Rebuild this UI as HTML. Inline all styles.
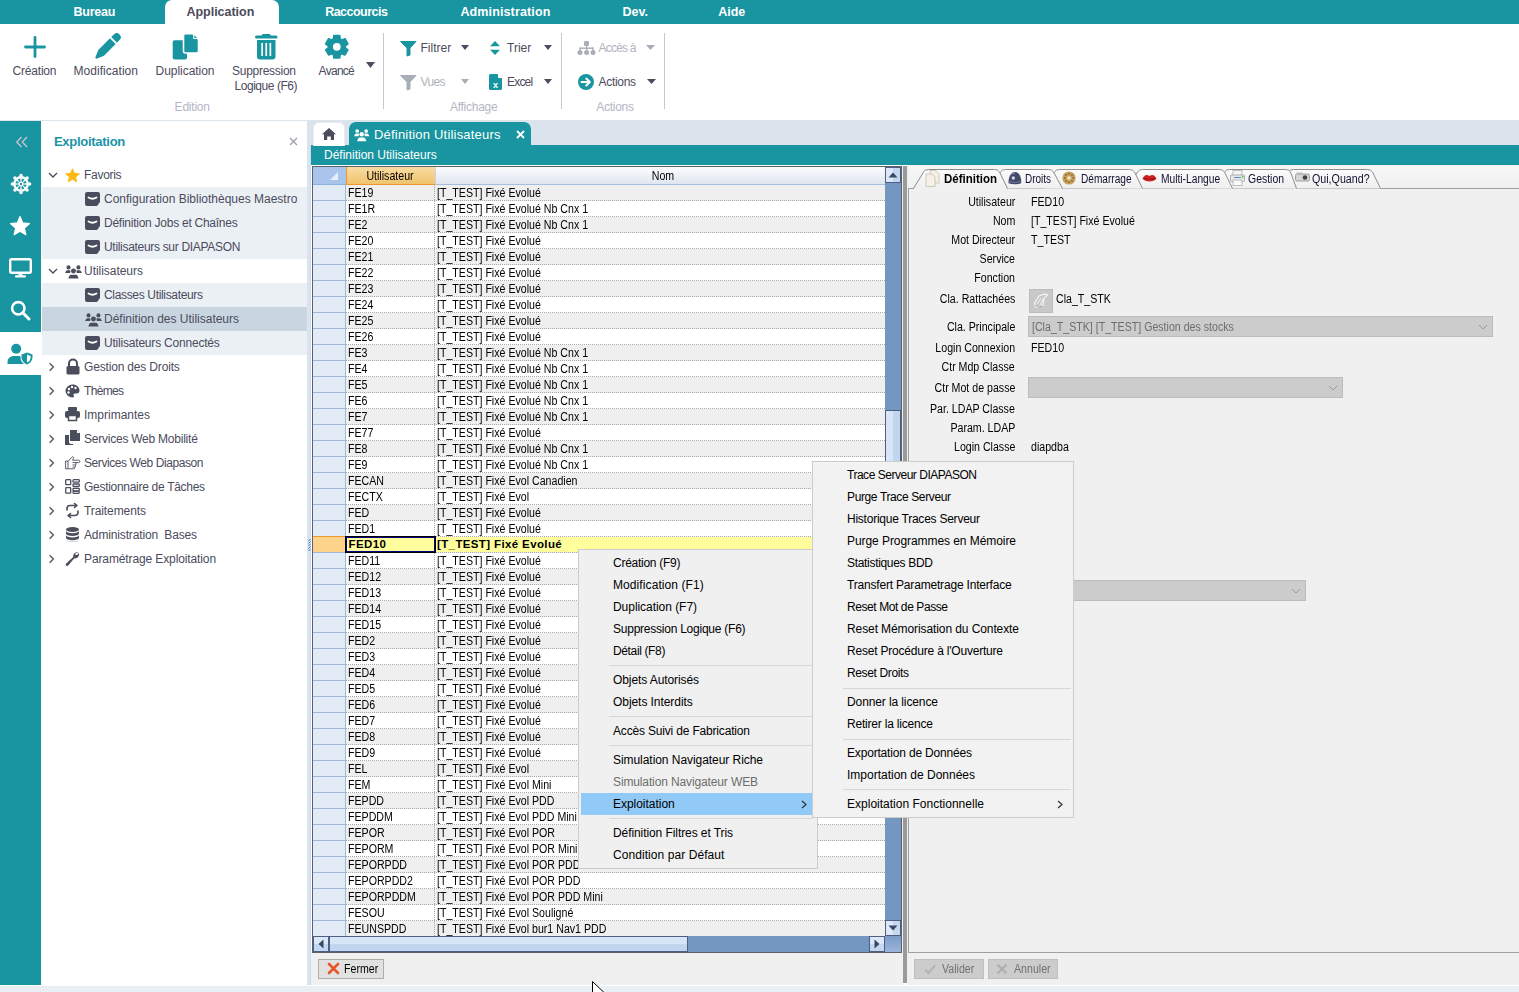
<!DOCTYPE html>
<html><head><meta charset="utf-8">
<style>
*{margin:0;padding:0;box-sizing:border-box}
html,body{width:1519px;height:992px;overflow:hidden;background:#fff;font-family:"Liberation Sans",sans-serif;position:relative}
.a{position:absolute}
.t{position:absolute;white-space:nowrap;line-height:1}
svg.a{overflow:visible}
</style></head><body>

<div class="a" style="left:0px;top:0px;width:1519px;height:24px;background:#1895a0;"></div>
<div class="a" style="left:165px;top:0px;width:114px;height:24px;background:#fff;border-radius:7px 7px 0 0"></div>
<div class="t" style="top:5.72px;font-size:12.5px;color:#fff;letter-spacing:-0.193px;font-weight:bold;left:73.4px;">Bureau</div>
<div class="t" style="top:5.72px;font-size:12.5px;color:#4b4b5c;letter-spacing:-0.025px;font-weight:bold;left:186.5px;">Application</div>
<div class="t" style="top:5.72px;font-size:12.5px;color:#fff;letter-spacing:-0.521px;font-weight:bold;left:325.2px;">Raccourcis</div>
<div class="t" style="top:5.72px;font-size:12.5px;color:#fff;letter-spacing:0.131px;font-weight:bold;left:460.4px;">Administration</div>
<div class="t" style="top:5.72px;font-size:12.5px;color:#fff;letter-spacing:0.042px;font-weight:bold;left:622.4px;">Dev.</div>
<div class="t" style="top:5.72px;font-size:12.5px;color:#fff;letter-spacing:-0.029px;font-weight:bold;left:718.2px;">Aide</div>
<div class="a" style="left:0px;top:120px;width:1519px;height:1px;background:#dde5ec;"></div>
<svg class="a" style="left:24px;top:36px;" width="22" height="22" viewBox="0 0 22 22"><path d="M11 1.5V20.5M1.5 11H20.5" stroke="#1895a0" stroke-width="2.8" stroke-linecap="round"/></svg>
<svg class="a" style="left:0px;top:0px;" width="1" height="1" viewBox="0 0 1 1"><g transform="translate(95.5,58.5) rotate(-45)" fill="#1895a0"><path d="M0.5 -0.8 Q0 0 0.5 0.8 L8 4 H24.5 V-4 H8Z"/><path d="M26.3 -4 H30 a4 4 0 0 1 0 8 H26.3z"/></g></svg>
<svg class="a" style="left:0px;top:0px;" width="1" height="1" viewBox="0 0 1 1"><rect x="172.7" y="40.2" width="14.3" height="19.3" rx="2" fill="#1895a0"/><path d="M185.5 33.8 H192.8 L198.5 39.5 V51 a2 2 0 0 1-2 2 H185.5 a2 2 0 0 1-2-2 V35.8 a2 2 0 0 1 2-2z" fill="#1895a0" stroke="#fff" stroke-width="1.6"/><path d="M193.2 33.8 L198.5 39.1 H193.2z" fill="#fff"/><path d="M194.3 35.2 L197.1 38 H194.3z" fill="#1895a0"/></svg>
<svg class="a" style="left:255px;top:34px;" width="23" height="26" viewBox="0 0 23 26"><g fill="#1895a0"><rect x="0" y="1.5" width="22.5" height="3" rx="1.5"/><rect x="7" y="0" width="8.5" height="3" rx="1.2"/><path d="M2 6 h18.5 v16.5 a3 3 0 0 1-3 3 h-12.5 a3 3 0 0 1-3-3z"/></g><g fill="#fff"><rect x="6.3" y="9" width="1.7" height="13"/><rect x="10.4" y="9" width="1.7" height="13"/><rect x="14.5" y="9" width="1.7" height="13"/></g></svg>
<svg class="a" style="left:323.5px;top:34px;" width="26" height="26" viewBox="0 0 26 26"><path fill="#1895a0" stroke="#1895a0" stroke-width="1.5" stroke-linejoin="round" d="M9.38 4.91 L9.82 1.59 L15.78 1.59 L16.22 4.91 L17.93 5.90 L21.02 4.61 L24.00 9.78 L21.34 11.81 L21.34 13.79 L24.00 15.82 L21.02 20.99 L17.93 19.70 L16.22 20.69 L15.78 24.01 L9.82 24.01 L9.38 20.69 L7.67 19.70 L4.58 20.99 L1.60 15.82 L4.26 13.79 L4.26 11.81 L1.60 9.78 L4.58 4.61 L7.67 5.90Z"/><circle cx="12.8" cy="12.8" r="3.9" fill="#fff"/></svg>
<svg class="a" style="left:365.5px;top:62px;" width="9" height="6" viewBox="0 0 9 6"><path d="M0 0H9L4.5 6Z" fill="#4a4e5c"/></svg>
<div class="t" style="top:64.84px;font-size:12px;color:#4b4b5c;letter-spacing:-0.193px;left:12.5px;">Création</div>
<div class="t" style="top:64.84px;font-size:12px;color:#4b4b5c;letter-spacing:0.043px;left:73.5px;">Modification</div>
<div class="t" style="top:64.84px;font-size:12px;color:#4b4b5c;letter-spacing:-0.036px;left:155.5px;">Duplication</div>
<div class="t" style="top:64.84px;font-size:12px;color:#4b4b5c;letter-spacing:-0.27px;left:232px;">Suppression</div>
<div class="t" style="top:79.84px;font-size:12px;color:#4b4b5c;letter-spacing:-0.457px;left:234.5px;">Logique (F6)</div>
<div class="t" style="top:64.84px;font-size:12px;color:#4b4b5c;letter-spacing:-0.721px;left:318.6px;">Avancé</div>
<div class="t" style="top:100.84px;font-size:12px;color:#b4b6c6;letter-spacing:-0.215px;left:174.6px;">Edition</div>
<div class="a" style="left:383px;top:33px;width:1px;height:76px;background:#c5c8cf;"></div>
<div class="a" style="left:561px;top:33px;width:1px;height:76px;background:#c5c8cf;"></div>
<div class="a" style="left:664px;top:33px;width:1px;height:76px;background:#c5c8cf;"></div>
<svg class="a" style="left:400px;top:41px;" width="17" height="15" viewBox="0 0 17 15"><path d="M0.5 0.5 H16 L10 7 V14 L7 15 V7Z" fill="#1895a0" stroke="#1895a0" stroke-width="1" stroke-linejoin="round"/></svg>
<div class="t" style="top:41.84px;font-size:12px;color:#4b4b5c;letter-spacing:0.023px;left:420.5px;">Filtrer</div>
<svg class="a" style="left:461px;top:45px;" width="8" height="5" viewBox="0 0 8 5"><path d="M0 0H8L4.0 5Z" fill="#4a4e5c"/></svg>
<svg class="a" style="left:490px;top:41px;" width="10" height="14" viewBox="0 0 10 14"><path d="M5 0 L10 5.2 H0Z M5 14 L10 8.8 H0Z" fill="#1895a0"/></svg>
<div class="t" style="top:41.84px;font-size:12px;color:#4b4b5c;letter-spacing:0.021px;left:507px;">Trier</div>
<svg class="a" style="left:544px;top:45px;" width="8" height="5" viewBox="0 0 8 5"><path d="M0 0H8L4.0 5Z" fill="#4a4e5c"/></svg>
<svg class="a" style="left:400px;top:75px;" width="17" height="15" viewBox="0 0 17 15"><path d="M0.5 0.5 H16 L10 7 V14 L7 15 V7Z" fill="#a8aeb7" stroke="#a8aeb7" stroke-width="1" stroke-linejoin="round"/></svg>
<div class="t" style="top:75.84px;font-size:12px;color:#b0b4bd;letter-spacing:-0.635px;left:420.5px;">Vues</div>
<svg class="a" style="left:461px;top:79px;" width="8" height="5" viewBox="0 0 8 5"><path d="M0 0H8L4.0 5Z" fill="#a8aeb7"/></svg>
<svg class="a" style="left:489px;top:74px;" width="13" height="16" viewBox="0 0 13 16"><path d="M1.5 0 H8.5 L13 4.5 V14.5 a1.5 1.5 0 0 1-1.5 1.5 H1.5 A1.5 1.5 0 0 1 0 14.5 V1.5 A1.5 1.5 0 0 1 1.5 0Z" fill="#1895a0"/><path d="M9 0 V4 H13" fill="#fff"/><text x="6.5" y="14.2" font-size="9" font-weight="bold" fill="#fff" text-anchor="middle" font-family="Liberation Sans">x</text></svg>
<div class="t" style="top:75.84px;font-size:12px;color:#4b4b5c;letter-spacing:-0.8px;left:507px;">Excel</div>
<svg class="a" style="left:544px;top:79px;" width="8" height="5" viewBox="0 0 8 5"><path d="M0 0H8L4.0 5Z" fill="#4a4e5c"/></svg>
<div class="t" style="top:100.84px;font-size:12px;color:#b4b6c6;letter-spacing:-0.277px;left:450px;">Affichage</div>
<svg class="a" style="left:577px;top:41px;" width="19" height="14" viewBox="0 0 19 14"><g fill="#a8aeb7"><rect x="7" y="0" width="5" height="5" rx="1.2"/><rect x="9" y="4" width="1.2" height="4"/><rect x="2.5" y="6.5" width="14" height="1.4"/><rect x="2.5" y="6.5" width="1.4" height="3"/><rect x="9" y="6.5" width="1.4" height="3"/><rect x="15.2" y="6.5" width="1.4" height="3"/><circle cx="3" cy="11.5" r="2.5"/><circle cx="9.6" cy="11.5" r="2.5"/><circle cx="16" cy="11.5" r="2.5"/></g></svg>
<div class="t" style="top:41.84px;font-size:12px;color:#b0b4bd;letter-spacing:-0.8px;left:598.6px;">Accès à</div>
<svg class="a" style="left:646px;top:45px;" width="9" height="5" viewBox="0 0 9 5"><path d="M0 0H9L4.5 5Z" fill="#a8aeb7"/></svg>
<svg class="a" style="left:578px;top:74px;" width="16" height="16" viewBox="0 0 16 16"><circle cx="8" cy="8" r="8" fill="#1895a0"/><path d="M3.5 8 H11.5 M8.3 4.5 L11.8 8 L8.3 11.5" stroke="#fff" stroke-width="2" fill="none" stroke-linecap="round" stroke-linejoin="round"/></svg>
<div class="t" style="top:75.84px;font-size:12px;color:#4b4b5c;letter-spacing:-0.308px;left:598.5px;">Actions</div>
<svg class="a" style="left:646.5px;top:79px;" width="9" height="5" viewBox="0 0 9 5"><path d="M0 0H9L4.5 5Z" fill="#4a4e5c"/></svg>
<div class="t" style="top:100.84px;font-size:12px;color:#b4b6c6;letter-spacing:-0.275px;left:596.3px;">Actions</div>
<div class="a" style="left:0px;top:121px;width:41px;height:864px;background:#1895a0;"></div>
<div class="a" style="left:0px;top:332px;width:41px;height:43px;background:#fff;"></div>
<svg class="a" style="left:15px;top:136px;" width="14" height="12" viewBox="0 0 14 12"><path d="M6.5 1 L1.8 6 L6.5 11 M12 1 L7.3 6 L12 11" stroke="#c5c3d3" stroke-width="1.4" fill="none"/></svg>
<svg class="a" style="left:10.7px;top:173.7px;" width="20" height="20" viewBox="0 0 20 20"><circle cx="10" cy="10" r="7.9" fill="#fff"/><circle cx="18.60" cy="10.00" r="1.7" fill="#fff"/><circle cx="16.08" cy="16.08" r="1.7" fill="#fff"/><circle cx="10.00" cy="18.60" r="1.7" fill="#fff"/><circle cx="3.92" cy="16.08" r="1.7" fill="#fff"/><circle cx="1.40" cy="10.00" r="1.7" fill="#fff"/><circle cx="3.92" cy="3.92" r="1.7" fill="#fff"/><circle cx="10.00" cy="1.40" r="1.7" fill="#fff"/><circle cx="16.08" cy="3.92" r="1.7" fill="#fff"/><path d="M12.56 10.43 L15.54 10.80 L14.48 13.36 L12.12 11.51Z" fill="#1895a0"/><path d="M11.51 12.12 L13.36 14.48 L10.80 15.54 L10.43 12.56Z" fill="#1895a0"/><path d="M9.57 12.56 L9.20 15.54 L6.64 14.48 L8.49 12.12Z" fill="#1895a0"/><path d="M7.88 11.51 L5.52 13.36 L4.46 10.80 L7.44 10.43Z" fill="#1895a0"/><path d="M7.44 9.57 L4.46 9.20 L5.52 6.64 L7.88 8.49Z" fill="#1895a0"/><path d="M8.49 7.88 L6.64 5.52 L9.20 4.46 L9.57 7.44Z" fill="#1895a0"/><path d="M10.43 7.44 L10.80 4.46 L13.36 5.52 L11.51 7.88Z" fill="#1895a0"/><path d="M12.12 8.49 L14.48 6.64 L15.54 9.20 L12.56 9.57Z" fill="#1895a0"/><circle cx="10" cy="10" r="1.2" fill="#1895a0"/></svg>
<svg class="a" style="left:10px;top:216px;" width="20" height="20" viewBox="0 0 20 20"><path d="M10.00 0.60 L12.70 6.88 L19.51 7.51 L14.37 12.02 L15.88 18.69 L10.00 15.20 L4.12 18.69 L5.63 12.02 L0.49 7.51 L7.30 6.88Z" fill="#fff" stroke="#fff" stroke-width="1.2" stroke-linejoin="round"/></svg>
<svg class="a" style="left:9px;top:258px;" width="23" height="20" viewBox="0 0 23 20"><rect x="1.2" y="1.2" width="20.6" height="13.6" rx="1.5" stroke="#fff" stroke-width="2.4" fill="none"/><rect x="9.5" y="14.5" width="4" height="3" fill="#fff"/><rect x="6" y="17.2" width="11" height="2.2" rx="1" fill="#fff"/></svg>
<svg class="a" style="left:10px;top:300px;" width="21" height="21" viewBox="0 0 21 21"><circle cx="8.3" cy="8.3" r="6.2" stroke="#fff" stroke-width="2.6" fill="none"/><path d="M12.8 12.8 L19 19" stroke="#fff" stroke-width="3" stroke-linecap="round"/></svg>
<svg class="a" style="left:0px;top:0px;" width="1" height="1" viewBox="0 0 1 1"><circle cx="16.2" cy="348.7" r="5" fill="#1895a0"/><path d="M7.5 364 V361.5 a6 6 0 0 1 6-5.5 H20.5 L24.5 364 Z" fill="#1895a0"/><path d="M21.5 354.5 L27 352.5 L32.5 354.5 V357 C32.5 361 29.5 363.5 27 364.5 C24.5 363.5 21.5 361 21.5 357 Z" fill="#1895a0" stroke="#fff" stroke-width="2"/><path d="M21.5 354.5 L27 352.5 L32.5 354.5 V357 C32.5 361 29.5 363.5 27 364.5 C24.5 363.5 21.5 361 21.5 357 Z" fill="#1895a0"/><path d="M27 354.6 L30.6 355.9 V357.3 C30.6 360 28.9 361.9 27 362.6 Z" fill="#fff"/></svg>
<div class="a" style="left:41px;top:121px;width:266px;height:864px;background:#fff;"></div>
<div class="a" style="left:307px;top:121px;width:4px;height:864px;background:#dbe4ec;"></div>
<div class="a" style="left:310px;top:145px;width:1px;height:840px;background:#c9dcf3;"></div>
<div class="t" style="top:135.00px;font-size:13px;color:#1b93a8;letter-spacing:-0.271px;font-weight:bold;left:53.9px;">Exploitation</div>
<svg class="a" style="left:289px;top:137px;" width="9" height="9" viewBox="0 0 9 9"><path d="M1 1L8 8M8 1L1 8" stroke="#9aa0aa" stroke-width="1.3"/></svg>
<div class="a" style="left:42px;top:187px;width:265px;height:72px;background:#ebf0f5;"></div>
<div class="a" style="left:42px;top:283px;width:265px;height:72px;background:#ebf0f5;"></div>
<div class="a" style="left:42px;top:307px;width:265px;height:24px;background:#c9d6e1;"></div>
<svg class="a" style="left:48px;top:172px;" width="10" height="6" viewBox="0 0 10 6"><path d="M1 1 L5 5 L9 1" stroke="#4b4b5c" stroke-width="1.3" fill="none"/></svg>
<svg class="a" style="left:65px;top:168px;" width="15" height="15" viewBox="0 0 15 15"><path d="M7.50 0.70 L9.44 5.33 L14.44 5.74 L10.64 9.02 L11.79 13.91 L7.50 11.30 L3.21 13.91 L4.36 9.02 L0.56 5.74 L5.56 5.33Z" fill="#fdb813" stroke="#fdb813" stroke-width="0.8" stroke-linejoin="round"/></svg>
<div class="t" style="top:168.84px;font-size:12px;color:#4b4b5c;letter-spacing:-0.29px;left:84px;">Favoris</div>
<svg class="a" style="left:85px;top:192px;" width="15" height="14" viewBox="0 0 15 14"><path d="M2 0 H13 a2 2 0 0 1 2 2 V10 L12 14 H2 a2 2 0 0 1-2-2 V2 a2 2 0 0 1 2-2z" fill="#4a4e5c"/><path d="M3.5 5.5 Q7.5 8 11.5 5.5" stroke="#fff" stroke-width="1.8" fill="none" stroke-linecap="round"/></svg>
<div class="t" style="top:192.84px;font-size:12px;color:#4b4b5c;letter-spacing:-0.004px;left:104px;">Configuration Bibliothèques Maestro</div>
<svg class="a" style="left:85px;top:216px;" width="15" height="14" viewBox="0 0 15 14"><path d="M2 0 H13 a2 2 0 0 1 2 2 V10 L12 14 H2 a2 2 0 0 1-2-2 V2 a2 2 0 0 1 2-2z" fill="#4a4e5c"/><path d="M3.5 5.5 Q7.5 8 11.5 5.5" stroke="#fff" stroke-width="1.8" fill="none" stroke-linecap="round"/></svg>
<div class="t" style="top:216.84px;font-size:12px;color:#4b4b5c;letter-spacing:-0.255px;left:104px;">Définition Jobs et Chaînes</div>
<svg class="a" style="left:85px;top:240px;" width="15" height="14" viewBox="0 0 15 14"><path d="M2 0 H13 a2 2 0 0 1 2 2 V10 L12 14 H2 a2 2 0 0 1-2-2 V2 a2 2 0 0 1 2-2z" fill="#4a4e5c"/><path d="M3.5 5.5 Q7.5 8 11.5 5.5" stroke="#fff" stroke-width="1.8" fill="none" stroke-linecap="round"/></svg>
<div class="t" style="top:240.84px;font-size:12px;color:#4b4b5c;letter-spacing:-0.309px;left:104px;">Utilisateurs sur DIAPASON</div>
<svg class="a" style="left:48px;top:268px;" width="10" height="6" viewBox="0 0 10 6"><path d="M1 1 L5 5 L9 1" stroke="#4b4b5c" stroke-width="1.3" fill="none"/></svg>
<svg class="a" style="left:65px;top:263px;" width="18" height="15" viewBox="0 0 18 15"><g fill="#4a4e5c" transform="scale(1.1)"><circle cx="3.2" cy="4" r="1.85"/><circle cx="12.2" cy="4" r="1.85"/><circle cx="7.7" cy="7.3" r="2.25"/><path d="M0 9.2 L1 7.2 Q1.4 6.6 2.2 6.6 H4.9 Q5.1 8 4.6 9.2z"/><path d="M15.4 9.2 L14.4 7.2 Q14 6.6 13.2 6.6 H10.5 Q10.3 8 10.8 9.2z"/><path d="M3 14.2 L4 11.7 Q4.5 10.6 5.5 10.6 H9.9 Q10.9 10.6 11.4 11.7 L12.4 14.2z"/></g></svg>
<div class="t" style="top:264.84px;font-size:12px;color:#4b4b5c;letter-spacing:-0.041px;left:84px;">Utilisateurs</div>
<svg class="a" style="left:85px;top:288px;" width="15" height="14" viewBox="0 0 15 14"><path d="M2 0 H13 a2 2 0 0 1 2 2 V10 L12 14 H2 a2 2 0 0 1-2-2 V2 a2 2 0 0 1 2-2z" fill="#4a4e5c"/><path d="M3.5 5.5 Q7.5 8 11.5 5.5" stroke="#fff" stroke-width="1.8" fill="none" stroke-linecap="round"/></svg>
<div class="t" style="top:288.84px;font-size:12px;color:#4b4b5c;letter-spacing:-0.335px;left:104px;">Classes Utilisateurs</div>
<svg class="a" style="left:85px;top:311px;" width="18" height="15" viewBox="0 0 18 15"><g fill="#4a4e5c" transform="scale(1.1)"><circle cx="3.2" cy="4" r="1.85"/><circle cx="12.2" cy="4" r="1.85"/><circle cx="7.7" cy="7.3" r="2.25"/><path d="M0 9.2 L1 7.2 Q1.4 6.6 2.2 6.6 H4.9 Q5.1 8 4.6 9.2z"/><path d="M15.4 9.2 L14.4 7.2 Q14 6.6 13.2 6.6 H10.5 Q10.3 8 10.8 9.2z"/><path d="M3 14.2 L4 11.7 Q4.5 10.6 5.5 10.6 H9.9 Q10.9 10.6 11.4 11.7 L12.4 14.2z"/></g></svg>
<div class="t" style="top:312.84px;font-size:12px;color:#4b4b5c;letter-spacing:-0.015px;left:104px;">Définition des Utilisateurs</div>
<svg class="a" style="left:85px;top:336px;" width="15" height="14" viewBox="0 0 15 14"><path d="M2 0 H13 a2 2 0 0 1 2 2 V10 L12 14 H2 a2 2 0 0 1-2-2 V2 a2 2 0 0 1 2-2z" fill="#4a4e5c"/><path d="M3.5 5.5 Q7.5 8 11.5 5.5" stroke="#fff" stroke-width="1.8" fill="none" stroke-linecap="round"/></svg>
<div class="t" style="top:336.84px;font-size:12px;color:#4b4b5c;letter-spacing:-0.202px;left:104px;">Utilisateurs Connectés</div>
<svg class="a" style="left:49px;top:362px;" width="6" height="10" viewBox="0 0 6 10"><path d="M0.6 1.3 L4.4 5 L0.6 8.7" stroke="#4b4b5c" stroke-width="1.2" fill="none"/></svg>
<div class="t" style="top:360.84px;font-size:12px;color:#4b4b5c;letter-spacing:-0.171px;left:84px;white-space:pre;">Gestion des Droits</div>
<svg class="a" style="left:49px;top:386px;" width="6" height="10" viewBox="0 0 6 10"><path d="M0.6 1.3 L4.4 5 L0.6 8.7" stroke="#4b4b5c" stroke-width="1.2" fill="none"/></svg>
<div class="t" style="top:384.84px;font-size:12px;color:#4b4b5c;letter-spacing:-0.669px;left:84px;white-space:pre;">Thèmes</div>
<svg class="a" style="left:49px;top:410px;" width="6" height="10" viewBox="0 0 6 10"><path d="M0.6 1.3 L4.4 5 L0.6 8.7" stroke="#4b4b5c" stroke-width="1.2" fill="none"/></svg>
<div class="t" style="top:408.84px;font-size:12px;color:#4b4b5c;letter-spacing:-0.001px;left:84px;white-space:pre;">Imprimantes</div>
<svg class="a" style="left:49px;top:434px;" width="6" height="10" viewBox="0 0 6 10"><path d="M0.6 1.3 L4.4 5 L0.6 8.7" stroke="#4b4b5c" stroke-width="1.2" fill="none"/></svg>
<div class="t" style="top:432.84px;font-size:12px;color:#4b4b5c;letter-spacing:-0.234px;left:84px;white-space:pre;">Services Web Mobilité</div>
<svg class="a" style="left:49px;top:458px;" width="6" height="10" viewBox="0 0 6 10"><path d="M0.6 1.3 L4.4 5 L0.6 8.7" stroke="#4b4b5c" stroke-width="1.2" fill="none"/></svg>
<div class="t" style="top:456.84px;font-size:12px;color:#4b4b5c;letter-spacing:-0.422px;left:84px;white-space:pre;">Services Web Diapason</div>
<svg class="a" style="left:49px;top:482px;" width="6" height="10" viewBox="0 0 6 10"><path d="M0.6 1.3 L4.4 5 L0.6 8.7" stroke="#4b4b5c" stroke-width="1.2" fill="none"/></svg>
<div class="t" style="top:480.84px;font-size:12px;color:#4b4b5c;letter-spacing:-0.294px;left:84px;white-space:pre;">Gestionnaire de Tâches</div>
<svg class="a" style="left:49px;top:506px;" width="6" height="10" viewBox="0 0 6 10"><path d="M0.6 1.3 L4.4 5 L0.6 8.7" stroke="#4b4b5c" stroke-width="1.2" fill="none"/></svg>
<div class="t" style="top:504.84px;font-size:12px;color:#4b4b5c;letter-spacing:-0.09px;left:84px;white-space:pre;">Traitements</div>
<svg class="a" style="left:49px;top:530px;" width="6" height="10" viewBox="0 0 6 10"><path d="M0.6 1.3 L4.4 5 L0.6 8.7" stroke="#4b4b5c" stroke-width="1.2" fill="none"/></svg>
<div class="t" style="top:528.84px;font-size:12px;color:#4b4b5c;letter-spacing:-0.147px;left:84px;white-space:pre;">Administration  Bases</div>
<svg class="a" style="left:49px;top:554px;" width="6" height="10" viewBox="0 0 6 10"><path d="M0.6 1.3 L4.4 5 L0.6 8.7" stroke="#4b4b5c" stroke-width="1.2" fill="none"/></svg>
<div class="t" style="top:552.84px;font-size:12px;color:#4b4b5c;letter-spacing:-0.115px;left:84px;white-space:pre;">Paramétrage Exploitation</div>
<svg class="a" style="left:66px;top:359px;" width="14" height="16" viewBox="0 0 14 16"><path d="M3 7 V4.5 a4 4 0 0 1 8 0 V7" stroke="#4a4e5c" stroke-width="2" fill="none"/><rect x="0.5" y="7" width="13" height="8.5" rx="1.5" fill="#4a4e5c"/></svg>
<svg class="a" style="left:65px;top:384px;" width="15" height="14" viewBox="0 0 15 14"><path d="M7.5 0.5 a7 6.5 0 0 0 0 13 c1.5 0 1.8-1 1.2-2 c-0.6-1 0-2 1.3-2 h1.5 a3 3 0 0 0 3-3 c0-3.5-3-6-7-6z" fill="#4a4e5c"/><circle cx="4" cy="5" r="1.2" fill="#fff"/><circle cx="7" cy="3" r="1.2" fill="#fff"/><circle cx="10.5" cy="4" r="1.2" fill="#fff"/><circle cx="3.5" cy="8.5" r="1.2" fill="#fff"/></svg>
<svg class="a" style="left:65px;top:407px;" width="15" height="14" viewBox="0 0 15 14"><g fill="#4a4e5c"><rect x="3" y="0" width="9" height="4" rx="1"/><rect x="0" y="4" width="15" height="7" rx="2"/></g><rect x="3.5" y="8.5" width="8" height="5" fill="#fff" stroke="#4a4e5c" stroke-width="1.5"/></svg>
<svg class="a" style="left:65px;top:430px;" width="15" height="15" viewBox="0 0 15 15"><g fill="#4a4e5c"><path d="M5 0 H12 L15 3 V11 H5z"/><path d="M0 5 H4 V12 a2 2 0 0 0 2 2 H8 V15 H0z"/></g><path d="M12 0 V3 H15" fill="#fff"/></svg>
<svg class="a" style="left:65px;top:455px;" width="16" height="15" viewBox="0 0 16 15"><path d="M0.6 6 H3 V13.8 H0.6z M3 6.5 L6.4 2.6 Q7.3 1.2 8.3 2 Q8.9 2.6 8.3 3.8 L7.6 5.2 H13.6 Q14.9 5.2 14.9 6.4 Q14.9 7.6 13.6 7.6 H10.2 Q11.2 7.8 11.2 8.9 Q11.2 10 10.1 10 Q10.8 10.4 10.6 11.3 Q10.4 12.1 9.5 12.1 Q10 12.6 9.7 13.2 Q9.4 13.8 8.4 13.8 H3 M7.5 7.6 H10.2 M7.5 10 H10.1 M7.5 12.1 H9.5" stroke="#4a4e5c" stroke-width="1" fill="none" stroke-linejoin="round" opacity="0.9"/></svg>
<svg class="a" style="left:65px;top:479px;" width="15" height="15" viewBox="0 0 15 15"><g fill="none" stroke="#4a4e5c" stroke-width="1.3"><rect x="0.7" y="0.7" width="5" height="5" rx="0.8"/><rect x="0.7" y="8.7" width="5" height="5.5" rx="0.8"/><rect x="8" y="0.7" width="6.3" height="2.5" rx="0.8"/><rect x="8" y="5" width="6.3" height="2.5" rx="0.8"/><rect x="8" y="9.3" width="6.3" height="2.5" rx="0.8"/><rect x="8" y="12.4" width="6.3" height="2" rx="0.8"/></g></svg>
<svg class="a" style="left:65px;top:503px;" width="15" height="15" viewBox="0 0 15 15"><path d="M2 7 V5.5 a3 3 0 0 1 3-3 H11.5 M9.5 0.5 L12 2.5 L9.5 4.5 M13 8 V9.5 a3 3 0 0 1-3 3 H3.5 M5.5 10.5 L3 12.5 L5.5 14.5" stroke="#4a4e5c" stroke-width="1.6" fill="none" stroke-linecap="round" stroke-linejoin="round"/></svg>
<svg class="a" style="left:66px;top:527px;" width="13" height="15" viewBox="0 0 13 15"><g fill="#4a4e5c"><ellipse cx="6.5" cy="2.5" rx="6.5" ry="2.5"/><path d="M0 3.8 a6.5 2.5 0 0 0 13 0 V6.5 a6.5 2.5 0 0 1-13 0z"/><path d="M0 8 a6.5 2.5 0 0 0 13 0 V10.7 a6.5 2.5 0 0 1-13 0z"/><path d="M0 12.2 a6.5 2.5 0 0 0 13 0 V12.5 a6.5 2.5 0 0 1-13 0z"/></g></svg>
<svg class="a" style="left:65px;top:551px;" width="15" height="15" viewBox="0 0 15 15"><path d="M13.5 1.5 a4 4 0 0 0-5.3 4.6 L1.2 12.5 a1.4 1.4 0 0 0 2 2 L9.3 7.3 a4 4 0 0 0 4.6-5.2 L11.8 4.2 L10.5 3.8 L10.2 2.6z" fill="#4a4e5c"/></svg>
<div class="a" style="left:311px;top:121px;width:1208px;height:24px;background:#dbe4ec;"></div>
<div class="a" style="left:311px;top:145px;width:1208px;height:20px;background:#1895a0;"></div>
<div class="a" style="left:313px;top:122px;width:32px;height:24px;background:#fff;border-radius:6px 6px 0 0;border:1px solid #e6ecf2;border-bottom:none"></div>
<svg class="a" style="left:322px;top:128px;" width="14" height="12" viewBox="0 0 14 12"><path d="M7 0 L14 6.3 H12 V12 H8.8 V8.5 H5.2 V12 H2 V6.3 H0z" fill="#4a4e5c"/></svg>
<div class="a" style="left:349px;top:122px;width:182px;height:24px;background:#1895a0;border-radius:7px 7px 0 0"></div>
<svg class="a" style="left:354px;top:127px;" width="18" height="15" viewBox="0 0 18 15"><g fill="#fff" transform="scale(1.0)"><circle cx="3.2" cy="4" r="1.85"/><circle cx="12.2" cy="4" r="1.85"/><circle cx="7.7" cy="7.3" r="2.25"/><path d="M0 9.2 L1 7.2 Q1.4 6.6 2.2 6.6 H4.9 Q5.1 8 4.6 9.2z"/><path d="M15.4 9.2 L14.4 7.2 Q14 6.6 13.2 6.6 H10.5 Q10.3 8 10.8 9.2z"/><path d="M3 14.2 L4 11.7 Q4.5 10.6 5.5 10.6 H9.9 Q10.9 10.6 11.4 11.7 L12.4 14.2z"/></g></svg>
<div class="t" style="top:128.00px;font-size:13px;color:#fff;letter-spacing:0.2px;left:374px;">Définition Utilisateurs</div>
<svg class="a" style="left:516px;top:130px;" width="9" height="9" viewBox="0 0 9 9"><path d="M1 1L8 8M8 1L1 8" stroke="#fff" stroke-width="1.8"/></svg>
<div class="t" style="top:148.84px;font-size:12px;color:#fff;left:324px;">Définition Utilisateurs</div>
<div class="a" style="left:312px;top:166px;width:590px;height:787px;background:#fff;border:1px solid #5d6068"></div>
<div class="a" style="left:902px;top:166px;width:1px;height:787px;background:#f0f0f0;"></div>
<div class="a" style="left:313px;top:167px;width:33px;height:18px;background:#a9c4ea;border-bottom:1px solid #8fb0d8"></div>
<svg class="a" style="left:330px;top:172px;" width="8" height="8" viewBox="0 0 8 8"><path d="M8 0 V8 H0z" fill="#e6eef9"/></svg>
<div class="a" style="left:346px;top:167px;width:89px;height:18px;background:linear-gradient(#f9dca3,#f0c36c);border-bottom:1px solid #f3962f;border-left:1px solid #f3962f"></div>
<div class="a" style="left:435px;top:167px;width:450px;height:18px;background:linear-gradient(#fbfcfe,#dfe5ef);border-bottom:1px solid #a7bfdc;border-left:1px solid #c9d5e6"></div>
<div class="t" style="top:169.84px;font-size:12px;color:#000;transform:scaleX(0.885);transform-origin:50% 0;left:346.0px;width:88px;text-align:center;">Utilisateur</div>
<div class="t" style="top:169.84px;font-size:12px;color:#000;transform:scaleX(0.885);transform-origin:50% 0;left:613.0px;width:100px;text-align:center;">Nom</div>
<div class="a" style="left:346px;top:185px;width:539px;height:751px;background:repeating-linear-gradient(#efefef 0px,#efefef 16px,#fff 16px,#fff 32px)"></div>
<div class="a" style="left:346px;top:185px;width:539px;height:751px;background-image:linear-gradient(90deg,#a9a9a9 50%,transparent 50%);background-size:2px 1px;-webkit-mask:repeating-linear-gradient(transparent 0px,transparent 15px,#000 15px,#000 16px)"></div>
<div class="a" style="left:434px;top:185px;width:1px;height:751px;background-image:linear-gradient(#a9a9a9 50%,transparent 50%);background-size:1px 2px"></div>
<div class="a" style="left:313px;top:185px;width:33px;height:751px;background:repeating-linear-gradient(#e3ebf7 0px,#e3ebf7 15px,#9fb8d8 15px,#9fb8d8 16px);border-right:1px solid #9fb8d8"></div>
<div class="t" style="top:186.84px;font-size:12px;color:#000;transform:scaleX(0.885);transform-origin:0 0;left:348px;">FE19</div>
<div class="t" style="top:186.84px;font-size:12px;color:#000;transform:scaleX(0.885);transform-origin:0 0;left:437px;">[T_TEST] Fixé Evolué</div>
<div class="t" style="top:202.84px;font-size:12px;color:#000;transform:scaleX(0.885);transform-origin:0 0;left:348px;">FE1R</div>
<div class="t" style="top:202.84px;font-size:12px;color:#000;transform:scaleX(0.885);transform-origin:0 0;left:437px;">[T_TEST] Fixé Evolué Nb Cnx 1</div>
<div class="t" style="top:218.84px;font-size:12px;color:#000;transform:scaleX(0.885);transform-origin:0 0;left:348px;">FE2</div>
<div class="t" style="top:218.84px;font-size:12px;color:#000;transform:scaleX(0.885);transform-origin:0 0;left:437px;">[T_TEST] Fixé Evolué Nb Cnx 1</div>
<div class="t" style="top:234.84px;font-size:12px;color:#000;transform:scaleX(0.885);transform-origin:0 0;left:348px;">FE20</div>
<div class="t" style="top:234.84px;font-size:12px;color:#000;transform:scaleX(0.885);transform-origin:0 0;left:437px;">[T_TEST] Fixé Evolué</div>
<div class="t" style="top:250.84px;font-size:12px;color:#000;transform:scaleX(0.885);transform-origin:0 0;left:348px;">FE21</div>
<div class="t" style="top:250.84px;font-size:12px;color:#000;transform:scaleX(0.885);transform-origin:0 0;left:437px;">[T_TEST] Fixé Evolué</div>
<div class="t" style="top:266.84px;font-size:12px;color:#000;transform:scaleX(0.885);transform-origin:0 0;left:348px;">FE22</div>
<div class="t" style="top:266.84px;font-size:12px;color:#000;transform:scaleX(0.885);transform-origin:0 0;left:437px;">[T_TEST] Fixé Evolué</div>
<div class="t" style="top:282.84px;font-size:12px;color:#000;transform:scaleX(0.885);transform-origin:0 0;left:348px;">FE23</div>
<div class="t" style="top:282.84px;font-size:12px;color:#000;transform:scaleX(0.885);transform-origin:0 0;left:437px;">[T_TEST] Fixé Evolué</div>
<div class="t" style="top:298.84px;font-size:12px;color:#000;transform:scaleX(0.885);transform-origin:0 0;left:348px;">FE24</div>
<div class="t" style="top:298.84px;font-size:12px;color:#000;transform:scaleX(0.885);transform-origin:0 0;left:437px;">[T_TEST] Fixé Evolué</div>
<div class="t" style="top:314.84px;font-size:12px;color:#000;transform:scaleX(0.885);transform-origin:0 0;left:348px;">FE25</div>
<div class="t" style="top:314.84px;font-size:12px;color:#000;transform:scaleX(0.885);transform-origin:0 0;left:437px;">[T_TEST] Fixé Evolué</div>
<div class="t" style="top:330.84px;font-size:12px;color:#000;transform:scaleX(0.885);transform-origin:0 0;left:348px;">FE26</div>
<div class="t" style="top:330.84px;font-size:12px;color:#000;transform:scaleX(0.885);transform-origin:0 0;left:437px;">[T_TEST] Fixé Evolué</div>
<div class="t" style="top:346.84px;font-size:12px;color:#000;transform:scaleX(0.885);transform-origin:0 0;left:348px;">FE3</div>
<div class="t" style="top:346.84px;font-size:12px;color:#000;transform:scaleX(0.885);transform-origin:0 0;left:437px;">[T_TEST] Fixé Evolué Nb Cnx 1</div>
<div class="t" style="top:362.84px;font-size:12px;color:#000;transform:scaleX(0.885);transform-origin:0 0;left:348px;">FE4</div>
<div class="t" style="top:362.84px;font-size:12px;color:#000;transform:scaleX(0.885);transform-origin:0 0;left:437px;">[T_TEST] Fixé Evolué Nb Cnx 1</div>
<div class="t" style="top:378.84px;font-size:12px;color:#000;transform:scaleX(0.885);transform-origin:0 0;left:348px;">FE5</div>
<div class="t" style="top:378.84px;font-size:12px;color:#000;transform:scaleX(0.885);transform-origin:0 0;left:437px;">[T_TEST] Fixé Evolué Nb Cnx 1</div>
<div class="t" style="top:394.84px;font-size:12px;color:#000;transform:scaleX(0.885);transform-origin:0 0;left:348px;">FE6</div>
<div class="t" style="top:394.84px;font-size:12px;color:#000;transform:scaleX(0.885);transform-origin:0 0;left:437px;">[T_TEST] Fixé Evolué Nb Cnx 1</div>
<div class="t" style="top:410.84px;font-size:12px;color:#000;transform:scaleX(0.885);transform-origin:0 0;left:348px;">FE7</div>
<div class="t" style="top:410.84px;font-size:12px;color:#000;transform:scaleX(0.885);transform-origin:0 0;left:437px;">[T_TEST] Fixé Evolué Nb Cnx 1</div>
<div class="t" style="top:426.84px;font-size:12px;color:#000;transform:scaleX(0.885);transform-origin:0 0;left:348px;">FE77</div>
<div class="t" style="top:426.84px;font-size:12px;color:#000;transform:scaleX(0.885);transform-origin:0 0;left:437px;">[T_TEST] Fixé Evolué</div>
<div class="t" style="top:442.84px;font-size:12px;color:#000;transform:scaleX(0.885);transform-origin:0 0;left:348px;">FE8</div>
<div class="t" style="top:442.84px;font-size:12px;color:#000;transform:scaleX(0.885);transform-origin:0 0;left:437px;">[T_TEST] Fixé Evolué Nb Cnx 1</div>
<div class="t" style="top:458.84px;font-size:12px;color:#000;transform:scaleX(0.885);transform-origin:0 0;left:348px;">FE9</div>
<div class="t" style="top:458.84px;font-size:12px;color:#000;transform:scaleX(0.885);transform-origin:0 0;left:437px;">[T_TEST] Fixé Evolué Nb Cnx 1</div>
<div class="t" style="top:474.84px;font-size:12px;color:#000;transform:scaleX(0.885);transform-origin:0 0;left:348px;">FECAN</div>
<div class="t" style="top:474.84px;font-size:12px;color:#000;transform:scaleX(0.885);transform-origin:0 0;left:437px;">[T_TEST] Fixé Evol Canadien</div>
<div class="t" style="top:490.84px;font-size:12px;color:#000;transform:scaleX(0.885);transform-origin:0 0;left:348px;">FECTX</div>
<div class="t" style="top:490.84px;font-size:12px;color:#000;transform:scaleX(0.885);transform-origin:0 0;left:437px;">[T_TEST] Fixé Evol</div>
<div class="t" style="top:506.84px;font-size:12px;color:#000;transform:scaleX(0.885);transform-origin:0 0;left:348px;">FED</div>
<div class="t" style="top:506.84px;font-size:12px;color:#000;transform:scaleX(0.885);transform-origin:0 0;left:437px;">[T_TEST] Fixé Evolué</div>
<div class="t" style="top:522.84px;font-size:12px;color:#000;transform:scaleX(0.885);transform-origin:0 0;left:348px;">FED1</div>
<div class="t" style="top:522.84px;font-size:12px;color:#000;transform:scaleX(0.885);transform-origin:0 0;left:437px;">[T_TEST] Fixé Evolué</div>
<div class="a" style="left:313px;top:536px;width:33px;height:16px;background:#fdd28a;border-top:1px solid #f3962f;border-right:1px solid #f3962f"></div>
<div class="a" style="left:346px;top:537px;width:539px;height:15px;background:#fffd9c;"></div>
<div class="a" style="left:345px;top:536px;width:91px;height:17px;background:transparent;border:1px solid #000"></div>
<div class="a" style="left:346px;top:537px;width:89px;height:15px;background:transparent;border:1px solid #000080"></div>
<svg class="a" style="left:308px;top:539px;" width="3" height="11" viewBox="0 0 3 11"><path d="M0.5 2 L2.5 0 M0.5 4.5 L2.5 2.5 M0.5 7 L2.5 5 M0.5 9.5 L2.5 7.5 M0.5 12 L2.5 10" stroke="#2a6fd6" stroke-width="1"/></svg>
<div class="t" style="top:539.27px;font-size:11.5px;color:#000;letter-spacing:0.427px;font-weight:bold;left:348.5px;">FED10</div>
<div class="t" style="top:539.27px;font-size:11.5px;color:#000;letter-spacing:0.375px;font-weight:bold;left:437px;">[T_TEST] Fixé Evolué</div>
<div class="t" style="top:554.84px;font-size:12px;color:#000;transform:scaleX(0.885);transform-origin:0 0;left:348px;">FED11</div>
<div class="t" style="top:554.84px;font-size:12px;color:#000;transform:scaleX(0.885);transform-origin:0 0;left:437px;">[T_TEST] Fixé Evolué</div>
<div class="t" style="top:570.84px;font-size:12px;color:#000;transform:scaleX(0.885);transform-origin:0 0;left:348px;">FED12</div>
<div class="t" style="top:570.84px;font-size:12px;color:#000;transform:scaleX(0.885);transform-origin:0 0;left:437px;">[T_TEST] Fixé Evolué</div>
<div class="t" style="top:586.84px;font-size:12px;color:#000;transform:scaleX(0.885);transform-origin:0 0;left:348px;">FED13</div>
<div class="t" style="top:586.84px;font-size:12px;color:#000;transform:scaleX(0.885);transform-origin:0 0;left:437px;">[T_TEST] Fixé Evolué</div>
<div class="t" style="top:602.84px;font-size:12px;color:#000;transform:scaleX(0.885);transform-origin:0 0;left:348px;">FED14</div>
<div class="t" style="top:602.84px;font-size:12px;color:#000;transform:scaleX(0.885);transform-origin:0 0;left:437px;">[T_TEST] Fixé Evolué</div>
<div class="t" style="top:618.84px;font-size:12px;color:#000;transform:scaleX(0.885);transform-origin:0 0;left:348px;">FED15</div>
<div class="t" style="top:618.84px;font-size:12px;color:#000;transform:scaleX(0.885);transform-origin:0 0;left:437px;">[T_TEST] Fixé Evolué</div>
<div class="t" style="top:634.84px;font-size:12px;color:#000;transform:scaleX(0.885);transform-origin:0 0;left:348px;">FED2</div>
<div class="t" style="top:634.84px;font-size:12px;color:#000;transform:scaleX(0.885);transform-origin:0 0;left:437px;">[T_TEST] Fixé Evolué</div>
<div class="t" style="top:650.84px;font-size:12px;color:#000;transform:scaleX(0.885);transform-origin:0 0;left:348px;">FED3</div>
<div class="t" style="top:650.84px;font-size:12px;color:#000;transform:scaleX(0.885);transform-origin:0 0;left:437px;">[T_TEST] Fixé Evolué</div>
<div class="t" style="top:666.84px;font-size:12px;color:#000;transform:scaleX(0.885);transform-origin:0 0;left:348px;">FED4</div>
<div class="t" style="top:666.84px;font-size:12px;color:#000;transform:scaleX(0.885);transform-origin:0 0;left:437px;">[T_TEST] Fixé Evolué</div>
<div class="t" style="top:682.84px;font-size:12px;color:#000;transform:scaleX(0.885);transform-origin:0 0;left:348px;">FED5</div>
<div class="t" style="top:682.84px;font-size:12px;color:#000;transform:scaleX(0.885);transform-origin:0 0;left:437px;">[T_TEST] Fixé Evolué</div>
<div class="t" style="top:698.84px;font-size:12px;color:#000;transform:scaleX(0.885);transform-origin:0 0;left:348px;">FED6</div>
<div class="t" style="top:698.84px;font-size:12px;color:#000;transform:scaleX(0.885);transform-origin:0 0;left:437px;">[T_TEST] Fixé Evolué</div>
<div class="t" style="top:714.84px;font-size:12px;color:#000;transform:scaleX(0.885);transform-origin:0 0;left:348px;">FED7</div>
<div class="t" style="top:714.84px;font-size:12px;color:#000;transform:scaleX(0.885);transform-origin:0 0;left:437px;">[T_TEST] Fixé Evolué</div>
<div class="t" style="top:730.84px;font-size:12px;color:#000;transform:scaleX(0.885);transform-origin:0 0;left:348px;">FED8</div>
<div class="t" style="top:730.84px;font-size:12px;color:#000;transform:scaleX(0.885);transform-origin:0 0;left:437px;">[T_TEST] Fixé Evolué</div>
<div class="t" style="top:746.84px;font-size:12px;color:#000;transform:scaleX(0.885);transform-origin:0 0;left:348px;">FED9</div>
<div class="t" style="top:746.84px;font-size:12px;color:#000;transform:scaleX(0.885);transform-origin:0 0;left:437px;">[T_TEST] Fixé Evolué</div>
<div class="t" style="top:762.84px;font-size:12px;color:#000;transform:scaleX(0.885);transform-origin:0 0;left:348px;">FEL</div>
<div class="t" style="top:762.84px;font-size:12px;color:#000;transform:scaleX(0.885);transform-origin:0 0;left:437px;">[T_TEST] Fixé Evol</div>
<div class="t" style="top:778.84px;font-size:12px;color:#000;transform:scaleX(0.885);transform-origin:0 0;left:348px;">FEM</div>
<div class="t" style="top:778.84px;font-size:12px;color:#000;transform:scaleX(0.885);transform-origin:0 0;left:437px;">[T_TEST] Fixé Evol Mini</div>
<div class="t" style="top:794.84px;font-size:12px;color:#000;transform:scaleX(0.885);transform-origin:0 0;left:348px;">FEPDD</div>
<div class="t" style="top:794.84px;font-size:12px;color:#000;transform:scaleX(0.885);transform-origin:0 0;left:437px;">[T_TEST] Fixé Evol PDD</div>
<div class="t" style="top:810.84px;font-size:12px;color:#000;transform:scaleX(0.885);transform-origin:0 0;left:348px;">FEPDDM</div>
<div class="t" style="top:810.84px;font-size:12px;color:#000;transform:scaleX(0.885);transform-origin:0 0;left:437px;">[T_TEST] Fixé Evol PDD Mini</div>
<div class="t" style="top:826.84px;font-size:12px;color:#000;transform:scaleX(0.885);transform-origin:0 0;left:348px;">FEPOR</div>
<div class="t" style="top:826.84px;font-size:12px;color:#000;transform:scaleX(0.885);transform-origin:0 0;left:437px;">[T_TEST] Fixé Evol POR</div>
<div class="t" style="top:842.84px;font-size:12px;color:#000;transform:scaleX(0.885);transform-origin:0 0;left:348px;">FEPORM</div>
<div class="t" style="top:842.84px;font-size:12px;color:#000;transform:scaleX(0.885);transform-origin:0 0;left:437px;">[T_TEST] Fixé Evol POR Mini</div>
<div class="t" style="top:858.84px;font-size:12px;color:#000;transform:scaleX(0.885);transform-origin:0 0;left:348px;">FEPORPDD</div>
<div class="t" style="top:858.84px;font-size:12px;color:#000;transform:scaleX(0.885);transform-origin:0 0;left:437px;">[T_TEST] Fixé Evol POR PDD</div>
<div class="t" style="top:874.84px;font-size:12px;color:#000;transform:scaleX(0.885);transform-origin:0 0;left:348px;">FEPORPDD2</div>
<div class="t" style="top:874.84px;font-size:12px;color:#000;transform:scaleX(0.885);transform-origin:0 0;left:437px;">[T_TEST] Fixé Evol POR PDD</div>
<div class="t" style="top:890.84px;font-size:12px;color:#000;transform:scaleX(0.885);transform-origin:0 0;left:348px;">FEPORPDDM</div>
<div class="t" style="top:890.84px;font-size:12px;color:#000;transform:scaleX(0.885);transform-origin:0 0;left:437px;">[T_TEST] Fixé Evol POR PDD Mini</div>
<div class="t" style="top:906.84px;font-size:12px;color:#000;transform:scaleX(0.885);transform-origin:0 0;left:348px;">FESOU</div>
<div class="t" style="top:906.84px;font-size:12px;color:#000;transform:scaleX(0.885);transform-origin:0 0;left:437px;">[T_TEST] Fixé Evol Souligné</div>
<div class="t" style="top:922.84px;font-size:12px;color:#000;transform:scaleX(0.885);transform-origin:0 0;left:348px;">FEUNSPDD</div>
<div class="t" style="top:922.84px;font-size:12px;color:#000;transform:scaleX(0.885);transform-origin:0 0;left:437px;">[T_TEST] Fixé Evol bur1 Nav1 PDD</div>
<div class="a" style="left:885px;top:167px;width:16px;height:769px;background:#7397c0;"></div>
<div class="a" style="left:885px;top:167px;width:16px;height:16px;background:linear-gradient(90deg,#dce8f8 50%,#c4d7f0 50%);border:1px solid #4d5f85"></div>
<svg class="a" style="left:885px;top:167px;" width="16" height="16" viewBox="0 0 16 16"><path d="M3.5 10.5 H12.5 L8 5.5z" fill="#3b4663"/></svg>
<div class="a" style="left:885px;top:920px;width:16px;height:16px;background:linear-gradient(90deg,#dce8f8 50%,#c4d7f0 50%);border:1px solid #4d5f85"></div>
<svg class="a" style="left:885px;top:920px;" width="16" height="16" viewBox="0 0 16 16"><path d="M3.5 5.5 H12.5 L8 10.5z" fill="#3b4663"/></svg>
<div class="a" style="left:885px;top:410px;width:16px;height:300px;background:linear-gradient(90deg,#d8e5f7 50%,#c2d5ef 50%);border:1px solid #4d5f85"></div>
<div class="a" style="left:313px;top:936px;width:572px;height:16px;background:#7397c0;"></div>
<div class="a" style="left:885px;top:936px;width:16px;height:16px;background:linear-gradient(#7b9cc6,#9ab4da);"></div>
<div class="a" style="left:313px;top:936px;width:16px;height:16px;background:linear-gradient(#dce8f8 50%,#c4d7f0 50%);border:1px solid #4d5f85"></div>
<svg class="a" style="left:313px;top:936px;" width="16" height="16" viewBox="0 0 16 16"><path d="M10.5 3.5 V12.5 L5.5 8z" fill="#3b4663"/></svg>
<div class="a" style="left:869px;top:936px;width:16px;height:16px;background:linear-gradient(#dce8f8 50%,#c4d7f0 50%);border:1px solid #4d5f85"></div>
<svg class="a" style="left:869px;top:936px;" width="16" height="16" viewBox="0 0 16 16"><path d="M5.5 3.5 V12.5 L10.5 8z" fill="#3b4663"/></svg>
<div class="a" style="left:329px;top:936px;width:359px;height:16px;background:linear-gradient(#d8e5f7 50%,#c2d5ef 50%);border:1px solid #4d5f85"></div>
<div class="a" style="left:311px;top:953px;width:592px;height:32px;background:#f0f0f0;"></div>
<div class="a" style="left:312px;top:166px;width:590px;height:787px;background:transparent;border:1px solid #5d6068"></div>
<div class="a" style="left:318px;top:959px;width:66px;height:20px;background:#e1e1e1;border:1px solid #adadad"></div>
<svg class="a" style="left:327px;top:962px;" width="13" height="13" viewBox="0 0 13 13"><path d="M2 2L11 11M11 2L2 11" stroke="#ea5426" stroke-width="2.6" stroke-linecap="round"/></svg>
<div class="t" style="top:962.84px;font-size:12px;color:#000;transform:scaleX(0.885);transform-origin:0 0;left:344px;">Fermer</div>
<div class="a" style="left:902px;top:165px;width:1px;height:820px;background:#f0f0f0;"></div>
<div class="a" style="left:903px;top:166px;width:4px;height:817px;background:#9a9a9a;"></div>
<div class="a" style="left:907px;top:165px;width:612px;height:820px;background:#f0f0f0;"></div>
<div class="a" style="left:908px;top:188px;width:612px;height:765px;background:transparent;border-left:1px solid #a0a0a0;border-top:1px solid #a0a0a0;border-bottom:1px solid #a0a0a0"></div>
<div class="a" style="left:909px;top:166px;width:610px;height:22px;background:linear-gradient(#f7f7f7,#f0f0f0);"></div>
<div class="a" style="left:908px;top:188px;width:611px;height:1px;background:#a0a0a0;"></div>
<svg class="a" style="left:905px;top:160px;" width="614" height="30" viewBox="0 0 614 30"><defs><linearGradient id="tg" x1="0" y1="0" x2="0" y2="1"><stop offset="0" stop-color="#fbfbfb"/><stop offset="1" stop-color="#efefef"/></linearGradient></defs><path d="M373.5 28.5 L383.5 12.0 Q385.0 9.5 388.5 9.5 H462.5 Q466.0 9.5 467.5 12.0 L475.5 28.5 Z" fill="url(#tg)" stroke="none"/><path d="M373.5 28.5 L383.5 12.0 Q385.0 9.5 388.5 9.5 H462.5 Q466.0 9.5 467.5 12.0 L475.5 28.5" fill="none" stroke="#8f8f8f" stroke-width="1"/><path d="M309.5 28.5 L319.5 12.0 Q321.0 9.5 324.5 9.5 H380.5 Q384.0 9.5 385.5 12.0 L391.5 28.5 Z" fill="url(#tg)" stroke="none"/><path d="M309.5 28.5 L319.5 12.0 Q321.0 9.5 324.5 9.5 H380.5 Q384.0 9.5 385.5 12.0 L391.5 28.5" fill="none" stroke="#8f8f8f" stroke-width="1"/><path d="M222.5 28.5 L232.5 12.0 Q234.0 9.5 237.5 9.5 H314.5 Q318.0 9.5 319.5 12.0 L327.5 28.5 Z" fill="url(#tg)" stroke="none"/><path d="M222.5 28.5 L232.5 12.0 Q234.0 9.5 237.5 9.5 H314.5 Q318.0 9.5 319.5 12.0 L327.5 28.5" fill="none" stroke="#8f8f8f" stroke-width="1"/><path d="M139.5 28.5 L149.5 12.0 Q151.0 9.5 154.5 9.5 H224.5 Q228.0 9.5 229.5 12.0 L237.5 28.5 Z" fill="url(#tg)" stroke="none"/><path d="M139.5 28.5 L149.5 12.0 Q151.0 9.5 154.5 9.5 H224.5 Q228.0 9.5 229.5 12.0 L237.5 28.5" fill="none" stroke="#8f8f8f" stroke-width="1"/><path d="M85.5 28.5 L95.5 12.0 Q97.0 9.5 100.5 9.5 H143.5 Q147.0 9.5 148.5 12.0 L157.5 28.5 Z" fill="url(#tg)" stroke="none"/><path d="M85.5 28.5 L95.5 12.0 Q97.0 9.5 100.5 9.5 H143.5 Q147.0 9.5 148.5 12.0 L157.5 28.5" fill="none" stroke="#8f8f8f" stroke-width="1"/><path d="M8.5 28.5 L18.5 12.0 Q20.0 9.5 23.5 9.5 H89.5 Q93.0 9.5 94.5 12.0 L102.5 28.5 Z" fill="url(#tg)" stroke="none"/><path d="M8.5 28.5 L18.5 12.0 Q20.0 9.5 23.5 9.5 H89.5 Q93.0 9.5 94.5 12.0 L102.5 28.5" fill="none" stroke="#8a8a8a" stroke-width="1"/></svg>
<div class="a" style="left:914px;top:188px;width:93px;height:2px;background:#f0f0f0;"></div>
<div class="t" style="top:172.84px;font-size:12px;color:#000;transform:scaleX(0.9581);transform-origin:0 0;font-weight:bold;left:943.5px;">Définition</div>
<div class="t" style="top:172.84px;font-size:12px;color:#101030;transform:scaleX(0.8297);transform-origin:0 0;left:1025px;">Droits</div>
<div class="t" style="top:172.84px;font-size:12px;color:#101030;transform:scaleX(0.8414);transform-origin:0 0;left:1080.5px;">Démarrage</div>
<div class="t" style="top:172.84px;font-size:12px;color:#101030;transform:scaleX(0.8534);transform-origin:0 0;left:1160.5px;">Multi-Langue</div>
<div class="t" style="top:172.84px;font-size:12px;color:#101030;transform:scaleX(0.8706);transform-origin:0 0;left:1248px;">Gestion</div>
<div class="t" style="top:172.84px;font-size:12px;color:#101030;transform:scaleX(0.8902);transform-origin:0 0;left:1312px;">Qui,Quand?</div>
<svg class="a" style="left:925px;top:170px;" width="16" height="17" viewBox="0 0 16 17"><path d="M5 0.5 H11 L14 3.5 V13 H5z" fill="#f3efe4" stroke="#c8c0b0" stroke-width="0.8"/><path d="M1 4 H7 L10 7 V16.5 H1z" fill="#f5f1e6" stroke="#c8c0b0" stroke-width="0.8"/></svg>
<svg class="a" style="left:1007px;top:171px;" width="15" height="14" viewBox="0 0 15 14"><path d="M1.5 12.3 C1.2 6.5 3.8 1 8 1 C12.2 1 14.6 6.5 14.2 12.3 Q8 14.3 1.5 12.3z" fill="#434968"/><path d="M2 10.6 Q8 12.4 13.8 10.6" stroke="#7a809a" stroke-width="0.9" fill="none"/><path d="M4 3.5 Q6 2 8 2.2" stroke="#8a90aa" stroke-width="1" fill="none"/><circle cx="6.3" cy="7" r="1.7" fill="#d4d6e0"/></svg>
<svg class="a" style="left:1062px;top:171px;" width="14" height="14" viewBox="0 0 14 14"><circle cx="7" cy="7" r="6.6" fill="#c8a05a"/><circle cx="7" cy="7" r="1.8" fill="#f4e8d0"/><g fill="#8a6a30"><circle cx="7" cy="2.8" r="0.9"/><circle cx="7" cy="11.2" r="0.9"/><circle cx="2.8" cy="7" r="0.9"/><circle cx="11.2" cy="7" r="0.9"/><circle cx="4" cy="4" r="0.9"/><circle cx="10" cy="10" r="0.9"/><circle cx="10" cy="4" r="0.9"/><circle cx="4" cy="10" r="0.9"/></g></svg>
<svg class="a" style="left:1142px;top:174px;" width="15" height="9" viewBox="0 0 15 9"><path d="M0.5 4.5 C3 0 5 0.5 7.5 2 C10 0.5 12 0 14.5 4.5 C12 8.5 3 8.5 0.5 4.5z" fill="#d02020"/><path d="M1.5 4.5 Q7.5 5.5 13.5 4.5" stroke="#801010" stroke-width="0.8" fill="none"/></svg>
<svg class="a" style="left:1230px;top:170px;" width="15" height="16" viewBox="0 0 15 16"><rect x="3" y="0.5" width="9" height="5" fill="#f5f5f5" stroke="#b0b0b0" stroke-width="0.8"/><rect x="0.5" y="5" width="14" height="6.5" rx="1" fill="#e8e8e8" stroke="#a0a0a0" stroke-width="0.8"/><rect x="3" y="10" width="9" height="5.5" fill="#fafafa" stroke="#b0b0b0" stroke-width="0.8"/><rect x="4" y="7" width="7" height="1" fill="#5a8ad0"/><rect x="12" y="6" width="1.5" height="1.5" fill="#40c040"/></svg>
<svg class="a" style="left:1295px;top:172px;" width="15" height="10" viewBox="0 0 15 10"><rect x="0.5" y="2" width="14" height="7" rx="1.5" fill="#d5d5d5" stroke="#909090" stroke-width="0.8"/><circle cx="10" cy="5.5" r="2.3" fill="#404040"/><rect x="1.5" y="0.5" width="6" height="2" fill="#bbb"/></svg>
<div class="t" style="top:195.84px;font-size:12px;color:#000;transform:scaleX(0.885);transform-origin:100% 0;right:504px;">Utilisateur</div>
<div class="t" style="top:195.84px;font-size:12px;color:#000;transform:scaleX(0.885);transform-origin:0 0;left:1031px;">FED10</div>
<div class="t" style="top:214.84px;font-size:12px;color:#000;transform:scaleX(0.885);transform-origin:100% 0;right:504px;">Nom</div>
<div class="t" style="top:214.84px;font-size:12px;color:#000;transform:scaleX(0.885);transform-origin:0 0;left:1031px;">[T_TEST] Fixé Evolué</div>
<div class="t" style="top:233.84px;font-size:12px;color:#000;transform:scaleX(0.885);transform-origin:100% 0;right:504px;">Mot Directeur</div>
<div class="t" style="top:233.84px;font-size:12px;color:#000;transform:scaleX(0.885);transform-origin:0 0;left:1031px;">T_TEST</div>
<div class="t" style="top:252.84px;font-size:12px;color:#000;transform:scaleX(0.885);transform-origin:100% 0;right:504px;">Service</div>
<div class="t" style="top:271.84px;font-size:12px;color:#000;transform:scaleX(0.885);transform-origin:100% 0;right:504px;">Fonction</div>
<div class="t" style="top:292.84px;font-size:12px;color:#000;transform:scaleX(0.885);transform-origin:100% 0;right:504px;">Cla. Rattachées</div>
<div class="t" style="top:320.84px;font-size:12px;color:#000;transform:scaleX(0.885);transform-origin:100% 0;right:504px;">Cla. Principale</div>
<div class="t" style="top:341.84px;font-size:12px;color:#000;transform:scaleX(0.885);transform-origin:100% 0;right:504px;">Login Connexion</div>
<div class="t" style="top:341.84px;font-size:12px;color:#000;transform:scaleX(0.885);transform-origin:0 0;left:1031px;">FED10</div>
<div class="t" style="top:360.84px;font-size:12px;color:#000;transform:scaleX(0.885);transform-origin:100% 0;right:504px;">Ctr Mdp Classe</div>
<div class="t" style="top:381.84px;font-size:12px;color:#000;transform:scaleX(0.885);transform-origin:100% 0;right:504px;">Ctr Mot de passe</div>
<div class="t" style="top:402.84px;font-size:12px;color:#000;transform:scaleX(0.885);transform-origin:100% 0;right:504px;">Par. LDAP Classe</div>
<div class="t" style="top:421.84px;font-size:12px;color:#000;transform:scaleX(0.885);transform-origin:100% 0;right:504px;">Param. LDAP</div>
<div class="t" style="top:440.84px;font-size:12px;color:#000;transform:scaleX(0.885);transform-origin:100% 0;right:504px;">Login Classe</div>
<div class="t" style="top:440.84px;font-size:12px;color:#000;transform:scaleX(0.885);transform-origin:0 0;left:1031px;">diapdba</div>
<div class="a" style="left:1029px;top:289px;width:24px;height:24px;background:#c8c8c8;border:1px solid #bdbdbd"></div>
<svg class="a" style="left:1033px;top:293px;" width="16" height="16" viewBox="0 0 16 16"><path d="M3 14 L1.5 10 L6 3 L12 1 L14.5 2 L11 5 L10 12 L6 14z" fill="none" stroke="#f4f4f4" stroke-width="1.3"/><path d="M4 11 L8 5 M7 12 L10 6" stroke="#f4f4f4" stroke-width="1"/><path d="M2.5 12 L5 14.5 L9 13" stroke="#9a9a9a" stroke-width="1" fill="none"/></svg>
<div class="t" style="top:292.84px;font-size:12px;color:#000;transform:scaleX(0.885);transform-origin:0 0;left:1056px;">Cla_T_STK</div>
<div class="a" style="left:1028px;top:316px;width:465px;height:21px;background:#cccccc;border:1px solid #bcbcbc"></div>
<svg class="a" style="left:1478px;top:323.5px;" width="10" height="6" viewBox="0 0 10 6"><path d="M1 1 L5 5 L9 1" stroke="#9a9a9a" stroke-width="1" fill="none"/></svg>
<div class="t" style="top:320.84px;font-size:12px;color:#6d6d6d;transform:scaleX(0.885);transform-origin:0 0;left:1032px;">[Cla_T_STK] [T_TEST] Gestion des stocks</div>
<div class="a" style="left:1028px;top:377px;width:315px;height:21px;background:#cccccc;border:1px solid #bcbcbc"></div>
<svg class="a" style="left:1328px;top:384.5px;" width="10" height="6" viewBox="0 0 10 6"><path d="M1 1 L5 5 L9 1" stroke="#9a9a9a" stroke-width="1" fill="none"/></svg>
<div class="a" style="left:1028px;top:580px;width:278px;height:21px;background:#cccccc;border:1px solid #bcbcbc"></div>
<svg class="a" style="left:1291px;top:587.5px;" width="10" height="6" viewBox="0 0 10 6"><path d="M1 1 L5 5 L9 1" stroke="#9a9a9a" stroke-width="1" fill="none"/></svg>
<div class="a" style="left:914px;top:959px;width:70px;height:20px;background:#cccccc;border:1px solid #bfbfbf"></div>
<svg class="a" style="left:924px;top:963px;" width="12" height="12" viewBox="0 0 12 12"><path d="M1 6.5 L4.5 10 L11 2.5" stroke="#b3b3b3" stroke-width="2.2" fill="none"/></svg>
<div class="t" style="top:963.34px;font-size:12px;color:#717171;transform:scaleX(0.885);transform-origin:0 0;left:942px;">Valider</div>
<div class="a" style="left:988px;top:959px;width:70px;height:20px;background:#cccccc;border:1px solid #bfbfbf"></div>
<svg class="a" style="left:996px;top:963px;" width="12" height="12" viewBox="0 0 12 12"><path d="M1.5 1.5L10.5 10.5M10.5 1.5L1.5 10.5" stroke="#b0b0b0" stroke-width="2.4"/></svg>
<div class="t" style="top:963.34px;font-size:12px;color:#717171;transform:scaleX(0.885);transform-origin:0 0;left:1014px;">Annuler</div>
<div class="a" style="left:0px;top:985px;width:1519px;height:1px;background:#ffffff;"></div>
<div class="a" style="left:0px;top:986px;width:1519px;height:6px;background:#eaeff3;"></div>
<div class="a" style="left:578px;top:549px;width:240px;height:320px;background:#f0f0f0;border:1px solid #cccccc"></div>
<div class="a" style="left:609px;top:665px;width:204px;height:1px;background:#d7d7d7;"></div>
<div class="a" style="left:609px;top:716px;width:204px;height:1px;background:#d7d7d7;"></div>
<div class="a" style="left:609px;top:745px;width:204px;height:1px;background:#d7d7d7;"></div>
<div class="a" style="left:609px;top:818px;width:204px;height:1px;background:#d7d7d7;"></div>
<div class="a" style="left:581px;top:793px;width:232px;height:22px;background:#91c9f7;"></div>
<div class="t" style="top:557.24px;font-size:12px;color:#000;letter-spacing:-0.265px;left:613px;">Création (F9)</div>
<div class="t" style="top:579.24px;font-size:12px;color:#000;letter-spacing:0.09px;left:613px;">Modification (F1)</div>
<div class="t" style="top:601.24px;font-size:12px;color:#000;letter-spacing:-0.046px;left:613px;">Duplication (F7)</div>
<div class="t" style="top:623.24px;font-size:12px;color:#000;letter-spacing:-0.238px;left:613px;">Suppression Logique (F6)</div>
<div class="t" style="top:645.24px;font-size:12px;color:#000;letter-spacing:-0.361px;left:613px;">Détail (F8)</div>
<div class="t" style="top:674.24px;font-size:12px;color:#000;letter-spacing:-0.091px;left:613px;">Objets Autorisés</div>
<div class="t" style="top:696.24px;font-size:12px;color:#000;letter-spacing:-0.06px;left:613px;">Objets Interdits</div>
<div class="t" style="top:725.24px;font-size:12px;color:#000;letter-spacing:-0.176px;left:613px;">Accès Suivi de Fabrication</div>
<div class="t" style="top:754.24px;font-size:12px;color:#000;letter-spacing:-0.054px;left:613px;">Simulation Navigateur Riche</div>
<div class="t" style="top:776.24px;font-size:12px;color:#6d6d6d;letter-spacing:-0.127px;left:613px;">Simulation Navigateur WEB</div>
<div class="t" style="top:798.24px;font-size:12px;color:#000;letter-spacing:-0.031px;left:613px;">Exploitation</div>
<div class="t" style="top:827.24px;font-size:12px;color:#000;letter-spacing:-0.081px;left:613px;">Définition Filtres et Tris</div>
<div class="t" style="top:849.24px;font-size:12px;color:#000;letter-spacing:0.07px;left:613px;">Condition par Défaut</div>
<svg class="a" style="left:801px;top:800px;" width="6" height="9" viewBox="0 0 6 9"><path d="M1 1 L5 4.5 L1 8" stroke="#333" stroke-width="1.2" fill="none"/></svg>
<div class="a" style="left:812px;top:461px;width:262px;height:357px;background:#f2f2f2;border:1px solid #cccccc"></div>
<div class="a" style="left:843px;top:688px;width:228px;height:1px;background:#d7d7d7;"></div>
<div class="a" style="left:843px;top:739px;width:228px;height:1px;background:#d7d7d7;"></div>
<div class="a" style="left:843px;top:789px;width:228px;height:1px;background:#d7d7d7;"></div>
<div class="t" style="top:469.24px;font-size:12px;color:#000;letter-spacing:-0.478px;left:847px;">Trace Serveur DIAPASON</div>
<div class="t" style="top:491.24px;font-size:12px;color:#000;letter-spacing:-0.373px;left:847px;">Purge Trace Serveur</div>
<div class="t" style="top:513.24px;font-size:12px;color:#000;letter-spacing:-0.238px;left:847px;">Historique Traces Serveur</div>
<div class="t" style="top:535.24px;font-size:12px;color:#000;letter-spacing:-0.066px;left:847px;">Purge Programmes en Mémoire</div>
<div class="t" style="top:557.24px;font-size:12px;color:#000;letter-spacing:-0.313px;left:847px;">Statistiques BDD</div>
<div class="t" style="top:579.24px;font-size:12px;color:#000;letter-spacing:-0.186px;left:847px;">Transfert Parametrage Interface</div>
<div class="t" style="top:601.24px;font-size:12px;color:#000;letter-spacing:-0.415px;left:847px;">Reset Mot de Passe</div>
<div class="t" style="top:623.24px;font-size:12px;color:#000;letter-spacing:-0.094px;left:847px;">Reset Mémorisation du Contexte</div>
<div class="t" style="top:645.24px;font-size:12px;color:#000;letter-spacing:-0.203px;left:847px;">Reset Procédure à l&#x27;Ouverture</div>
<div class="t" style="top:667.24px;font-size:12px;color:#000;letter-spacing:-0.365px;left:847px;">Reset Droits</div>
<div class="t" style="top:696.24px;font-size:12px;color:#000;letter-spacing:-0.107px;left:847px;">Donner la licence</div>
<div class="t" style="top:718.24px;font-size:12px;color:#000;letter-spacing:-0.198px;left:847px;">Retirer la licence</div>
<div class="t" style="top:747.24px;font-size:12px;color:#000;letter-spacing:-0.178px;left:847px;">Exportation de Données</div>
<div class="t" style="top:769.24px;font-size:12px;color:#000;letter-spacing:-0.003px;left:847px;">Importation de Données</div>
<div class="t" style="top:798.24px;font-size:12px;color:#000;letter-spacing:0.01px;left:847px;">Exploitation Fonctionnelle</div>
<svg class="a" style="left:1057px;top:800px;" width="6" height="9" viewBox="0 0 6 9"><path d="M1 1 L5 4.5 L1 8" stroke="#333" stroke-width="1.2" fill="none"/></svg>
<svg class="a" style="left:592px;top:981px;" width="14" height="14" viewBox="0 0 14 14"><path d="M0.5 0.5 V17 L4.5 13 L7.5 19.5 L10 18.5 L7 12 H12.5z" fill="#fff" stroke="#000" stroke-width="1"/></svg>
</body></html>
